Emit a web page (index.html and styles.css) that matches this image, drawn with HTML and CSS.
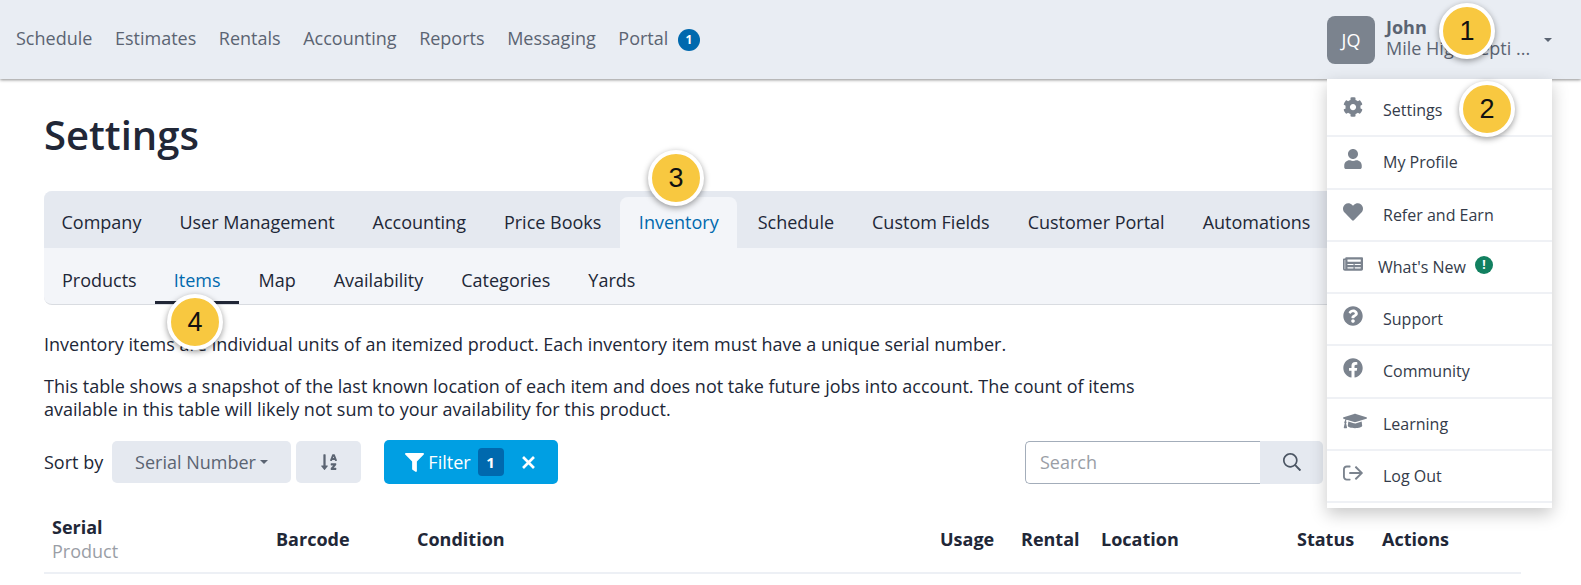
FILE: index.html

```html
<!DOCTYPE html>
<html lang="en">
<head>
  <meta charset="UTF-8">
  <meta name="viewport" content="width=device-width,initial-scale=1">
  <title>Settings</title>
  <link rel="stylesheet" href="styles.css">
</head>
<body>

  <header class="topbar">
    <nav class="topnav">
      <a>Schedule</a>
      <a>Estimates</a>
      <a>Rentals</a>
      <a>Accounting</a>
      <a>Reports</a>
      <a>Messaging</a>
      <a>Portal <span class="nav-badge">1</span></a>
    </nav>
    <div class="account">
      <div class="avatar">JQ</div>
      <div class="account-text">
        <div class="account-name">John</div>
        <div class="account-org">Mile High Septi ...</div>
      </div>
      <span class="caret account-caret"></span>
    </div>
  </header>

  <main class="content">
    <h1>Settings</h1>

    <div class="tabs">
      <div class="tabs-main">
        <a>Company</a>
        <a>User Management</a>
        <a>Accounting</a>
        <a>Price Books</a>
        <a class="active">Inventory</a>
        <a>Schedule</a>
        <a>Custom Fields</a>
        <a>Customer Portal</a>
        <a>Automations</a>
      </div>
      <div class="tabs-sub">
        <a>Products</a>
        <a class="active">Items</a>
        <a>Map</a>
        <a>Availability</a>
        <a>Categories</a>
        <a>Yards</a>
      </div>
    </div>

    <p class="intro">Inventory items are individual units of an itemized product. Each inventory item must have a unique serial number.</p>
    <p class="intro note">This table shows a snapshot of the last known location of each item and does not take future jobs into account. The count of items available in this table will likely not sum to your availability for this product.</p>

    <div class="toolbar">
      <span class="sort-label">Sort by</span>
      <button class="btn sort-field">Serial Number <span class="caret"></span></button>
      <button class="btn sort-dir">
        <svg class="sort-icon" viewBox="0 0 448 512"><path d="M176 352h-48V48a16 16 0 0 0-16-16H80a16 16 0 0 0-16 16v304H16c-14.19 0-21.36 17.24-11.31 27.31l80 96a16 16 0 0 0 22.62 0l80-96C197.35 369.26 190.22 352 176 352zm240-64H288a16 16 0 0 0-16 16v32a16 16 0 0 0 16 16h56l-61.26 70.45A32 32 0 0 0 272 446.37V464a16 16 0 0 0 16 16h128a16 16 0 0 0 16-16v-32a16 16 0 0 0-16-16h-56l61.26-70.45A32 32 0 0 0 432 321.63V304a16 16 0 0 0-16-16zm31.06-85.38l-59.27-160A16 16 0 0 0 372.72 32h-41.44a16 16 0 0 0-15.07 10.62l-59.27 160A16 16 0 0 0 272 224h24.83a16 16 0 0 0 15.23-11.08l4.42-12.92h71l4.42 12.92A16 16 0 0 0 407.16 224H432a16 16 0 0 0 15.06-21.38zM335.61 144L352 96l16.39 48z"/></svg>
      </button>
      <button class="btn filter">
        <svg class="filter-icon" viewBox="0 0 512 512"><path d="M487.976 0H24.028C2.71 0-8.047 25.866 7.058 40.971L192 225.941V432c0 7.831 3.821 15.17 10.237 19.662l80 55.98C298.02 518.69 320 507.493 320 487.98V225.941l184.947-184.97C520.021 25.896 509.338 0 487.976 0z"/></svg>
        Filter
        <span class="filter-count">1</span>
        <svg class="filter-clear" viewBox="0 0 14 14"><path d="M2.5 2.5l9 9M11.500 2.500l-9 9"/></svg>
      </button>
      <div class="search">
        <input class="search-input" placeholder="Search">
        <button class="search-btn">
          <svg viewBox="0 0 512 512"><path d="M508.5 468.9L387.1 347.5c-2.3-2.3-5.3-3.5-8.5-3.5h-13.2c31.5-36.5 50.6-84 50.6-136C416 93.1 322.9 0 208 0S0 93.1 0 208s93.1 208 208 208c52 0 99.5-19.1 136-50.6v13.2c0 3.2 1.3 6.2 3.5 8.5l121.4 121.4c4.7 4.7 12.3 4.7 17 0l22.6-22.6c4.7-4.7 4.7-12.3 0-17zM208 368c-88.4 0-160-71.6-160-160S119.6 48 208 48s160 71.6 160 160-71.6 160-160 160z"/></svg>
        </button>
      </div>
    </div>

    <div class="table-head">
      <div class="col-serial">Serial<span class="col-sub">Product</span></div>
      <div>Barcode</div>
      <div>Condition</div>
      <div>Usage</div>
      <div>Rental</div>
      <div>Location</div>
      <div>Status</div>
      <div>Actions</div>
    </div>
  </main>

  <div class="menu">
    <a class="menu-item">
      <svg viewBox="0 0 512 512"><path d="M487.4 315.7l-42.6-24.6c4.3-23.2 4.3-47 0-70.2l42.6-24.6c4.9-2.8 7.1-8.6 5.5-14-11.1-35.6-30-67.8-54.7-94.6-3.8-4.1-10-5.1-14.8-2.3L380.8 110c-17.9-15.4-38.5-27.3-60.8-35.1V25.8c0-5.6-3.9-10.5-9.4-11.7-36.7-8.2-74.3-7.8-109.2 0-5.5 1.2-9.4 6.1-9.4 11.7V75c-22.2 7.9-42.8 19.8-60.8 35.1L88.7 85.5c-4.9-2.8-11-1.9-14.8 2.3-24.7 26.7-43.6 58.9-54.7 94.6-1.7 5.4.6 11.2 5.5 14L67.3 221c-4.3 23.2-4.3 47 0 70.2l-42.6 24.6c-4.9 2.8-7.1 8.6-5.5 14 11.1 35.6 30 67.8 54.7 94.6 3.8 4.1 10 5.1 14.8 2.3l42.6-24.6c17.9 15.4 38.5 27.3 60.8 35.1v49.2c0 5.6 3.9 10.5 9.4 11.7 36.7 8.2 74.3 7.8 109.2 0 5.5-1.2 9.4-6.1 9.4-11.7v-49.2c22.2-7.9 42.8-19.8 60.8-35.1l42.6 24.6c4.9 2.8 11 1.9 14.8-2.3 24.7-26.7 43.6-58.9 54.7-94.6 1.5-5.5-.7-11.3-5.6-14.1zM256 336c-44.1 0-80-35.9-80-80s35.9-80 80-80 80 35.9 80 80-35.9 80-80 80z"/></svg>
      Settings
    </a>
    <a class="menu-item">
      <svg viewBox="0 0 448 512"><path d="M224 256c70.7 0 128-57.3 128-128S294.700 0 224 0 96 57.300 96 128s57.300 128 128 128zm89.600 32h-16.700c-22.200 10.200-46.900 16-72.900 16s-50.600-5.800-72.900-16h-16.700C60.200 288 0 348.200 0 422.400V464c0 26.500 21.500 48 48 48h352c26.500 0 48-21.500 48-48v-41.600c0-74.200-60.200-134.400-134.400-134.400z"/></svg>
      My Profile
    </a>
    <a class="menu-item">
      <svg viewBox="0 0 512 512"><path d="M462.3 62.6C407.5 15.9 326 24.3 275.7 76.2L256 96.5l-19.7-20.3C186.1 24.3 104.5 15.9 49.7 62.6c-62.8 53.6-66.1 149.8-9.9 207.9l193.5 199.8c12.5 12.9 32.8 12.9 45.3 0l193.5-199.8c56.3-58.1 53-154.3-9.8-207.9z"/></svg>
      Refer and Earn
    </a>
    <a class="menu-item news">
      <svg viewBox="0 0 576 512"><path d="M552 64H88c-13.255 0-24 10.745-24 24v8H24c-13.255 0-24 10.745-24 24v272c0 30.928 25.072 56 56 56h472c26.510 0 48-21.490 48-48V88c0-13.255-10.745-24-24-24zM56 400a8 8 0 0 1-8-8V144h16v248a8 8 0 0 1-8 8zm236-16H140c-6.627 0-12-5.373-12-12v-8c0-6.627 5.373-12 12-12h152c6.627 0 12 5.373 12 12v8c0 6.627-5.373 12-12 12zm208 0H348c-6.627 0-12-5.373-12-12v-8c0-6.627 5.373-12 12-12h152c6.627 0 12 5.373 12 12v8c0 6.627-5.373 12-12 12zm-208-96H140c-6.627 0-12-5.373-12-12v-8c0-6.627 5.373-12 12-12h152c6.627 0 12 5.373 12 12v8c0 6.627-5.373 12-12 12zm208 0H348c-6.627 0-12-5.373-12-12v-8c0-6.627 5.373-12 12-12h152c6.627 0 12 5.373 12 12v8c0 6.627-5.373 12-12 12zm0-96H140c-6.627 0-12-5.373-12-12v-40c0-6.627 5.373-12 12-12h360c6.627 0 12 5.373 12 12v40c0 6.627-5.373 12-12 12z"/></svg>
      What's New <span class="new-badge">!</span>
    </a>
    <a class="menu-item">
      <svg viewBox="0 0 512 512"><path d="M504 256c0 136.997-111.043 248-248 248S8 392.997 8 256C8 119.083 119.043 8 256 8s248 111.083 248 248zM262.655 90c-54.497 0-89.255 22.957-116.549 63.758-3.536 5.286-2.353 12.415 2.715 16.258l34.699 26.310c5.205 3.947 12.621 3.008 16.665-2.122 17.864-22.658 30.113-35.797 57.303-35.797 20.429 0 45.698 13.148 45.698 32.958 0 14.976-12.363 22.667-32.534 33.976C247.128 238.528 216 254.941 216 296v4c0 6.627 5.373 12 12 12h56c6.627 0 12-5.373 12-12v-1.333c0-28.462 83.186-29.647 83.186-106.667 0-58.002-60.165-102-116.531-102zM256 338c-25.365 0-46 20.635-46 46 0 25.364 20.635 46 46 46s46-20.636 46-46c0-25.365-20.635-46-46-46z"/></svg>
      Support
    </a>
    <a class="menu-item">
      <svg viewBox="0 0 512 512"><path d="M504 256C504 119 393 8 256 8S8 119 8 256c0 123.780 90.690 226.380 209.250 245V327.690h-63V256h63v-54.640c0-62.150 37-96.480 93.670-96.480 27.140 0 55.520 4.840 55.520 4.840v61h-31.280c-30.800 0-40.410 19.120-40.410 38.730V256h68.780l-11 71.690h-57.780V501C413.310 482.380 504 379.780 504 256z"/></svg>
      Community
    </a>
    <a class="menu-item">
      <svg class="wide" viewBox="0 0 640 512"><path d="M622.340 153.200L343.400 67.500c-15.200-4.670-31.600-4.670-46.790 0L17.660 153.200c-23.540 7.230-23.540 38.360 0 45.590l48.630 14.940c-10.670 13.190-17.230 29.280-17.880 46.900C38.780 266.150 32 276.110 32 288c0 10.780 5.680 19.850 13.860 25.650L20.330 428.530C18.110 438.520 25.710 448 35.940 448h56.110c10.240 0 17.840-9.480 15.620-19.470L82.140 313.650C90.320 307.850 96 298.780 96 288c0-11.570-6.470-21.250-15.660-26.870.76-15.020 8.440-28.300 20.690-36.720L296.600 284.500c9.060 2.780 26.440 6.250 46.790 0l278.950-85.700c23.550-7.240 23.550-38.360 0-45.600zM352.790 315.090c-28.530 8.760-52.840 3.920-65.590 0l-145.020-44.550L128 384c0 35.350 85.960 64 192 64s192-28.650 192-64l-14.180-113.470-145.030 44.560z"/></svg>
      Learning
    </a>
    <a class="menu-item">
      <svg viewBox="0 0 512 512"><path d="M96 64h84c6.600 0 12 5.400 12 12v24c0 6.600-5.400 12-12 12H96c-26.500 0-48 21.500-48 48v192c0 26.500 21.500 48 48 48h84c6.600 0 12 5.400 12 12v24c0 6.600-5.400 12-12 12H96c-53 0-96-43-96-96V160c0-53 43-96 96-96zm231.100 19.500l-19.600 19.600c-4.800 4.800-4.700 12.500.2 17.100L420.800 228H172c-6.600 0-12 5.400-12 12v32c0 6.600 5.400 12 12 12h248.800L307.700 391.700c-4.800 4.700-4.900 12.400-.2 17.100l19.600 19.600c4.700 4.700 12.300 4.700 17 0l164.400-164c4.700-4.700 4.700-12.300 0-17l-164.400-164c-4.700-4.600-12.300-4.600-17 .1z"/></svg>
      Log Out
    </a>
  </div>

  <div class="callout callout-1">1</div>
  <div class="callout callout-2">2</div>
  <div class="callout callout-3">3</div>
  <div class="callout callout-4">4</div>

</body>
</html>
```

FILE: styles.css

```css
* {
  box-sizing: border-box;
}
html, body {
  height: 585px;
  overflow: hidden;
}
body {
  margin: 0;
  background: #fff;
  color: #212737;
  font-family: 'Open Sans', sans-serif;
  font-size: 18px;
}

/* top bar */
.topbar {
  height: 79px;
  background: #e9edf3;
  box-shadow: 0 1px 3px rgba(0, 0, 0, .45);
  display: flex;
  align-items: center;
  justify-content: space-between;
  padding: 0 29px 0 16px;
}
.topnav {
  display: flex;
  gap: 22.6px;
  padding-bottom: 2px;
  color: #5b6472;
}
.nav-badge {
  display: inline-flex;
  align-items: center;
  justify-content: center;
  width: 22px;
  height: 22px;
  margin-left: 5px;
  border-radius: 50%;
  background: #0069ae;
  color: #fff;
  font-size: 12px;
  font-weight: 700;
  vertical-align: 1px;
}
.account {
  display: flex;
  align-items: center;
  width: 225px;
}
.avatar {
  width: 48px;
  height: 48px;
  border-radius: 8px;
  background: #7b838e;
  color: #fff;
  display: flex;
  align-items: center;
  justify-content: center;
  font-size: 18px;
  flex: none;
}
.account-text {
  margin-left: 11px;
  padding-bottom: 4px;
  line-height: 21px;
  color: #5b6472;
  white-space: nowrap;
}
.account-name {
  font-weight: 700;
}
.caret {
  display: inline-block;
  border-top: 4px solid currentColor;
  border-left: 4px solid transparent;
  border-right: 4px solid transparent;
  vertical-align: 2px;
}
.account-caret {
  margin-left: auto;
  color: #5b6472;
}

/* page */
.content {
  padding: 0 60px 0 44px;
}
h1 {
  margin: 0;
  padding-top: 28px;
  height: 112px;
  font-size: 40px;
  line-height: 56px;
  font-weight: 600;
}
.tabs {
  background: #f3f5f9;
  border-radius: 8px;
  border-bottom: 1px solid #d9dce1;
}
.tabs-main {
  height: 57px;
  padding: 6px 0 0;
  display: flex;
  background: #e5e9f0;
  border-radius: 8px 8px 0 0;
}
.tabs-main a {
  padding: 0 19px;
  line-height: 50px;
  white-space: nowrap;
}
.tabs-main a:first-child {
  padding-left: 17.5px;
}
.tabs-main a.active {
  background: #f3f5f9;
  color: #0069ae;
  font-weight: 500;
  border-radius: 8px 8px 0 0;
  padding: 0 18.5px;
  margin-right: 1.5px;
}
.tabs-sub {
  height: 56px;
  display: flex;
}
.tabs-sub a {
  padding: 0 19px;
  line-height: 64px;
  border-bottom: 3px solid transparent;
}
.tabs-sub a:first-child {
  padding: 0 18px;
}
.tabs-sub a.active {
  color: #0069ae;
  border-bottom-color: #212737;
}
.intro {
  margin: 28px 0 0;
  line-height: 23px;
  max-width: 1120px;
}
.note {
  margin-top: 19px;
}
.toolbar {
  margin-top: 19px;
  height: 44px;
  display: flex;
  align-items: center;
}
.sort-label {
  width: 68px;
  white-space: nowrap;
}
.btn {
  border: 0;
  border-radius: 5px;
  font: inherit;
  height: 42px;
  background: #e5e9f0;
  color: #5b6472;
  display: flex;
  align-items: center;
  justify-content: center;
  gap: 4px;
}
.sort-field {
  width: 179px;
}
.sort-dir {
  width: 65px;
  margin-left: 5px;
}
.sort-icon {
  width: 16px;
  height: 18px;
  fill: #5b6472;
}
.filter {
  width: 174px;
  height: 44px;
  margin-left: 23px;
  background: #009fe3;
  color: #fff;
  gap: 0;
}
.filter-icon {
  width: 19px;
  height: 19px;
  fill: #fff;
  margin-right: 4px;
}
.filter-count {
  width: 26px;
  height: 28px;
  margin-left: 7px;
  border-radius: 4px;
  background: #0069ae;
  font-size: 15px;
  font-weight: 700;
  line-height: 28px;
}
.filter-clear {
  width: 17px;
  height: 17px;
  margin-left: 16px;
  fill: none;
  stroke: #fff;
  stroke-width: 2.2;
}
.search {
  margin-left: auto;
  margin-right: 198px;
  display: flex;
  height: 43px;
}
.search-input {
  width: 235px;
  height: 43px;
  padding: 0 14px;
  border: 1px solid #a3adba;
  border-right: 0;
  border-radius: 5px 0 0 5px;
  font: inherit;
  outline: 0;
}
.search-input::placeholder {
  color: #9a9ea6;
}
.search-btn {
  width: 63px;
  border: 0;
  background: #e5e9f0;
  border-radius: 0 5px 5px 0;
  display: flex;
  align-items: center;
  justify-content: center;
}
.search-btn svg {
  width: 18px;
  height: 18px;
  fill: #4b5563;
}

/* table header */
.table-head {
  margin-top: 23px;
  height: 67px;
  padding-bottom: 1px;
  border-bottom: 2px solid #edf0f5;
  display: grid;
  grid-template-columns: 224px 141px 523px 81px 80px 196px 85px auto;
  padding-left: 8px;
  align-items: center;
  font-weight: 700;
}
.col-sub {
  display: block;
  font-weight: 400;
  color: #9a9ea6;
}
.col-serial {
  line-height: 24px;
}

/* account dropdown */
.menu {
  position: absolute;
  left: 1327px;
  top: 79px;
  width: 225px;
  height: 429px;
  padding-top: 6px;
  background: #fff;
  box-shadow: 0 6px 16px rgba(0, 0, 0, .22);
  font-size: 16px;
}
.menu-item {
  height: 52.25px;
  padding-left: 56px;
  display: flex;
  align-items: center;
  border-bottom: 2px solid #eff1f5;
  color: #343b4a;
  position: relative;
}
.menu-item svg {
  position: absolute;
  left: 16px;
  top: 50%;
  margin-top: -13px;
  width: 20px;
  height: 20px;
  fill: #7b838e;
}
.menu-item svg.wide {
  width: 24px;
}
.news {
  padding-left: 51px;
}
.new-badge {
  width: 18px;
  height: 18px;
  margin-left: 9px;
  margin-top: -4px;
  border-radius: 50%;
  background: #128060;
  color: #fff;
  font-size: 12px;
  font-weight: 700;
  text-align: center;
  line-height: 18px;
}

/* numbered callouts */
.callout {
  position: absolute;
  width: 56px;
  height: 56px;
  border: 4px solid #fff;
  border-radius: 50%;
  background: #f8c840;
  box-shadow: 0 2px 6px rgba(0, 0, 0, .4);
  color: #111;
  font-family: 'Liberation Sans', sans-serif;
  font-size: 27px;
  line-height: 48px;
  text-align: center;
}
.callout-1 { left: 1439px; top: 3px; }
.callout-2 { left: 1459px; top: 81px; }
.callout-3 { left: 648px; top: 150px; }
.callout-4 { left: 167px; top: 294px; }
```
